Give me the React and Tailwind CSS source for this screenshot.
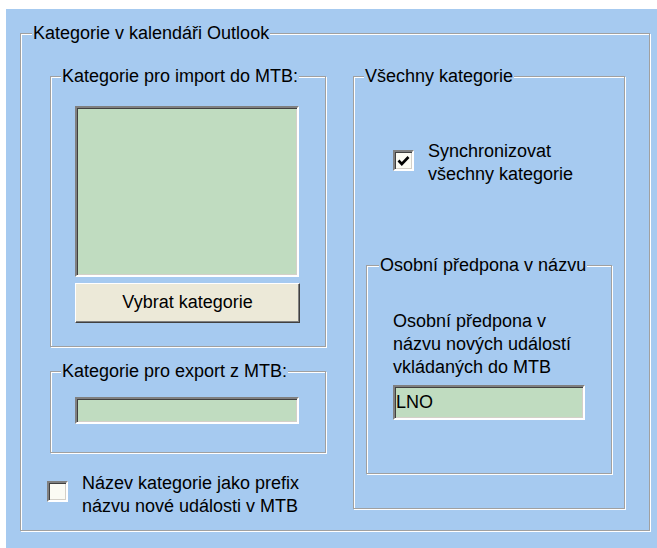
import React from "react";

const font = { fontFamily: '"Liberation Sans", Arial, sans-serif' };

function GroupBox({ title, className = "", labelLeft = "left-[10px]", children }) {
  return (
    <div
      className={
        "relative border border-[#a0a0a0] shadow-[inset_1px_1px_0_#ffffff,1px_1px_0_#ffffff] " +
        className
      }
    >
      <span
        className={
          "absolute -top-[12px] " +
          labelLeft +
          " px-[1px] bg-[#a6caf0] leading-[23px] whitespace-nowrap"
        }
      >
        {title}
      </span>
      {children}
    </div>
  );
}

function Sunken({ className = "", children }) {
  return (
    <div
      className={
        "border-2 border-t-[#808080] border-l-[#808080] border-b-white border-r-white shadow-[inset_1px_1px_0_#404040,inset_-1px_-1px_0_#d4d0c8] " +
        className
      }
    >
      {children}
    </div>
  );
}

function CheckBox({ checked, className = "" }) {
  return (
    <Sunken className={"w-[21px] h-[21px] bg-[#fbfbf4] flex items-center justify-center shrink-0 " + className}>
      {checked && (
        <svg width="13" height="12" viewBox="0 0 13 12">
          <polyline points="1.5,5.5 4.8,9 11.5,2" fill="none" stroke="#000" strokeWidth="2.6" />
        </svg>
      )}
    </Sunken>
  );
}

export default function App() {
  return (
    <div className="w-[657px] h-[548px] bg-white pt-[9px] pl-[6px] text-[18px] text-black" style={font}>
      <div className="w-full h-full bg-[#a6caf0] pl-[14px] pt-[24px]">
        <GroupBox title="Kategorie v kalendáři Outlook" className="w-[630px] h-[498px]" labelLeft="left-[11px]">
          <div className="flex pl-[29px] pt-[42px]">
            {/* left column */}
            <div className="flex flex-col w-[276px]">
              <GroupBox title="Kategorie pro import do MTB:" className="w-[276px] h-[271px]">
                <div className="pl-[24px] pt-[29px] flex flex-col">
                  <Sunken className="w-[224px] h-[171px] bg-[#c0dcc0]" />
                  <button
                    className="mt-[6px] w-[225px] h-[40px] bg-[#ece9d8] border border-t-white border-l-white border-r-[#404040] border-b-[#404040] shadow-[inset_-1px_-1px_0_#808080] leading-[23px] text-[18px] flex items-center justify-center pb-[2px]"
                    style={font}
                  >
                    Vybrat kategorie
                  </button>
                </div>
              </GroupBox>
              <GroupBox title="Kategorie pro export z MTB:" className="mt-[24px] w-[276px] h-[82px]">
                <div className="pl-[24px] pt-[25px]">
                  <Sunken className="w-[224px] h-[27px] bg-[#c0dcc0]" />
                </div>
              </GroupBox>
              <div className="flex items-start mt-[19px] -ml-[3px]">
                <CheckBox className="mt-[9px]" />
                <div className="ml-[14px] leading-[23px]">
                  Název kategorie jako prefix
                  <br />
                  názvu nové události v MTB
                </div>
              </div>
            </div>
            {/* right column */}
            <GroupBox title="Všechny kategorie" className="ml-[27px] w-[272px] h-[433px]">
              <div className="pt-[63px] pl-[39px] flex items-start">
                <CheckBox checked className="mt-[10px]" />
                <div className="ml-[14px] leading-[23px]">
                  Synchronizovat
                  <br />
                  všechny kategorie
                </div>
              </div>
              <div className="pl-[12px] mt-[79px]">
                <GroupBox title="Osobní předpona v názvu" className="w-[246px] h-[209px]" labelLeft="left-[12px]">
                  <div className="pl-[26px] pt-[44px] leading-[23px]">
                    Osobní předpona v
                    <br />
                    názvu nových událostí
                    <br />
                    vkládaných do MTB
                    <Sunken className="mt-[6px] w-[192px] h-[35px] bg-[#c0dcc0] flex items-center pl-[1px] pb-[1px]">
                      LNO
                    </Sunken>
                  </div>
                </GroupBox>
              </div>
            </GroupBox>
          </div>
        </GroupBox>
      </div>
    </div>
  );
}
